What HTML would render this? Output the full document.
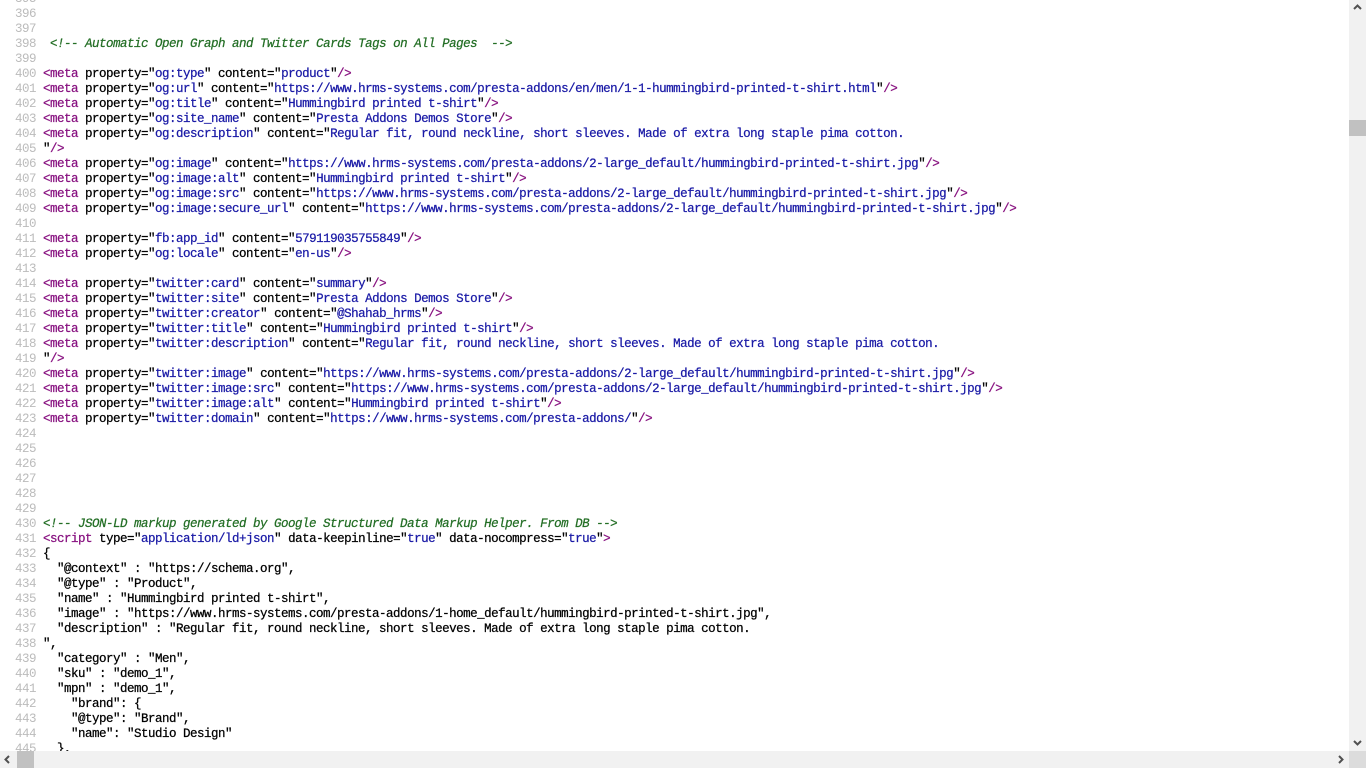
<!DOCTYPE html>
<html><head><meta charset="utf-8"><style>
html,body{margin:0;padding:0;width:1366px;height:768px;overflow:hidden;background:#fff}
#c{position:absolute;left:0;top:-8px;font:12.5px/15px "Liberation Mono",monospace;letter-spacing:-0.5px;color:#000;white-space:pre;-webkit-text-stroke:0.25px}
.l{height:15px}
.n{display:inline-block;width:36px;text-align:right;color:#bbb;margin-right:7px;letter-spacing:-0.5px;-webkit-text-stroke:0}
.t{color:#881280}.v{color:#1a1aa6}
.cm{color:#236e25;font-style:italic}
#vs{position:absolute;left:1349px;top:0;width:17px;height:751px;background:#f1f1f1}
#vt{position:absolute;left:1349px;top:120px;width:17px;height:16px;background:#c1c1c1}
#hs{position:absolute;left:0;top:751px;width:1349px;height:17px;background:#f1f1f1}
#ht{position:absolute;left:17px;top:751px;width:17px;height:17px;background:#c1c1c1}
#cr{position:absolute;left:1349px;top:751px;width:17px;height:17px;background:#dcdcdc}
svg{position:absolute}
</style></head><body>
<div id="c"><div class="l"><span class="n">395</span></div><div class="l"><span class="n">396</span></div><div class="l"><span class="n">397</span></div><div class="l"><span class="n">398</span> <span class="cm">&lt;!-- Automatic Open Graph and Twitter Cards Tags on All Pages  --&gt;</span></div><div class="l"><span class="n">399</span></div><div class="l"><span class="n">400</span><span class="t">&lt;meta</span> property="<span class="v">og:type</span>" content="<span class="v">product</span>"<span class="t">/&gt;</span></div><div class="l"><span class="n">401</span><span class="t">&lt;meta</span> property="<span class="v">og:url</span>" content="<span class="v">https://www.hrms-systems.com/presta-addons/en/men/1-1-hummingbird-printed-t-shirt.html</span>"<span class="t">/&gt;</span></div><div class="l"><span class="n">402</span><span class="t">&lt;meta</span> property="<span class="v">og:title</span>" content="<span class="v">Hummingbird printed t-shirt</span>"<span class="t">/&gt;</span></div><div class="l"><span class="n">403</span><span class="t">&lt;meta</span> property="<span class="v">og:site_name</span>" content="<span class="v">Presta Addons Demos Store</span>"<span class="t">/&gt;</span></div><div class="l"><span class="n">404</span><span class="t">&lt;meta</span> property="<span class="v">og:description</span>" content="<span class="v">Regular fit, round neckline, short sleeves. Made of extra long staple pima cotton.</span></div><div class="l"><span class="n">405</span>"<span class="t">/&gt;</span></div><div class="l"><span class="n">406</span><span class="t">&lt;meta</span> property="<span class="v">og:image</span>" content="<span class="v">https://www.hrms-systems.com/presta-addons/2-large_default/hummingbird-printed-t-shirt.jpg</span>"<span class="t">/&gt;</span></div><div class="l"><span class="n">407</span><span class="t">&lt;meta</span> property="<span class="v">og:image:alt</span>" content="<span class="v">Hummingbird printed t-shirt</span>"<span class="t">/&gt;</span></div><div class="l"><span class="n">408</span><span class="t">&lt;meta</span> property="<span class="v">og:image:src</span>" content="<span class="v">https://www.hrms-systems.com/presta-addons/2-large_default/hummingbird-printed-t-shirt.jpg</span>"<span class="t">/&gt;</span></div><div class="l"><span class="n">409</span><span class="t">&lt;meta</span> property="<span class="v">og:image:secure_url</span>" content="<span class="v">https://www.hrms-systems.com/presta-addons/2-large_default/hummingbird-printed-t-shirt.jpg</span>"<span class="t">/&gt;</span></div><div class="l"><span class="n">410</span></div><div class="l"><span class="n">411</span><span class="t">&lt;meta</span> property="<span class="v">fb:app_id</span>" content="<span class="v">579119035755849</span>"<span class="t">/&gt;</span></div><div class="l"><span class="n">412</span><span class="t">&lt;meta</span> property="<span class="v">og:locale</span>" content="<span class="v">en-us</span>"<span class="t">/&gt;</span></div><div class="l"><span class="n">413</span></div><div class="l"><span class="n">414</span><span class="t">&lt;meta</span> property="<span class="v">twitter:card</span>" content="<span class="v">summary</span>"<span class="t">/&gt;</span></div><div class="l"><span class="n">415</span><span class="t">&lt;meta</span> property="<span class="v">twitter:site</span>" content="<span class="v">Presta Addons Demos Store</span>"<span class="t">/&gt;</span></div><div class="l"><span class="n">416</span><span class="t">&lt;meta</span> property="<span class="v">twitter:creator</span>" content="<span class="v">@Shahab_hrms</span>"<span class="t">/&gt;</span></div><div class="l"><span class="n">417</span><span class="t">&lt;meta</span> property="<span class="v">twitter:title</span>" content="<span class="v">Hummingbird printed t-shirt</span>"<span class="t">/&gt;</span></div><div class="l"><span class="n">418</span><span class="t">&lt;meta</span> property="<span class="v">twitter:description</span>" content="<span class="v">Regular fit, round neckline, short sleeves. Made of extra long staple pima cotton.</span></div><div class="l"><span class="n">419</span>"<span class="t">/&gt;</span></div><div class="l"><span class="n">420</span><span class="t">&lt;meta</span> property="<span class="v">twitter:image</span>" content="<span class="v">https://www.hrms-systems.com/presta-addons/2-large_default/hummingbird-printed-t-shirt.jpg</span>"<span class="t">/&gt;</span></div><div class="l"><span class="n">421</span><span class="t">&lt;meta</span> property="<span class="v">twitter:image:src</span>" content="<span class="v">https://www.hrms-systems.com/presta-addons/2-large_default/hummingbird-printed-t-shirt.jpg</span>"<span class="t">/&gt;</span></div><div class="l"><span class="n">422</span><span class="t">&lt;meta</span> property="<span class="v">twitter:image:alt</span>" content="<span class="v">Hummingbird printed t-shirt</span>"<span class="t">/&gt;</span></div><div class="l"><span class="n">423</span><span class="t">&lt;meta</span> property="<span class="v">twitter:domain</span>" content="<span class="v">https://www.hrms-systems.com/presta-addons/</span>"<span class="t">/&gt;</span></div><div class="l"><span class="n">424</span></div><div class="l"><span class="n">425</span></div><div class="l"><span class="n">426</span></div><div class="l"><span class="n">427</span></div><div class="l"><span class="n">428</span></div><div class="l"><span class="n">429</span></div><div class="l"><span class="n">430</span><span class="cm">&lt;!-- JSON-LD markup generated by Google Structured Data Markup Helper. From DB --&gt;</span></div><div class="l"><span class="n">431</span><span class="t">&lt;script</span> type="<span class="v">application/ld+json</span>" data-keepinline="<span class="v">true</span>" data-nocompress="<span class="v">true</span>"<span class="t">&gt;</span></div><div class="l"><span class="n">432</span>{</div><div class="l"><span class="n">433</span>  "@context" : "https://schema.org",</div><div class="l"><span class="n">434</span>  "@type" : "Product",</div><div class="l"><span class="n">435</span>  "name" : "Hummingbird printed t-shirt",</div><div class="l"><span class="n">436</span>  "image" : "https://www.hrms-systems.com/presta-addons/1-home_default/hummingbird-printed-t-shirt.jpg",</div><div class="l"><span class="n">437</span>  "description" : "Regular fit, round neckline, short sleeves. Made of extra long staple pima cotton.</div><div class="l"><span class="n">438</span>",</div><div class="l"><span class="n">439</span>  "category" : "Men",</div><div class="l"><span class="n">440</span>  "sku" : "demo_1",</div><div class="l"><span class="n">441</span>  "mpn" : "demo_1",</div><div class="l"><span class="n">442</span>    "brand": {</div><div class="l"><span class="n">443</span>    "@type": "Brand",</div><div class="l"><span class="n">444</span>    "name": "Studio Design"</div><div class="l"><span class="n">445</span>  },</div></div>
<div id="vs"></div><div id="vt"></div><div id="hs"></div><div id="ht"></div><div id="cr"></div>
<svg style="left:1352px;top:3px" width="11" height="8"><path d="M2 6L5.5 2.5L9 6" stroke="#505050" stroke-width="2" fill="none"/></svg>
<svg style="left:1352px;top:739px" width="11" height="8"><path d="M2 2L5.5 5.5L9 2" stroke="#505050" stroke-width="2" fill="none"/></svg>
<svg style="left:3px;top:754px" width="8" height="11"><path d="M6 2L2.5 5.5L6 9" stroke="#505050" stroke-width="2" fill="none"/></svg>
<svg style="left:1337px;top:754px" width="8" height="11"><path d="M2 2L5.5 5.5L2 9" stroke="#505050" stroke-width="2" fill="none"/></svg>
</body></html>
